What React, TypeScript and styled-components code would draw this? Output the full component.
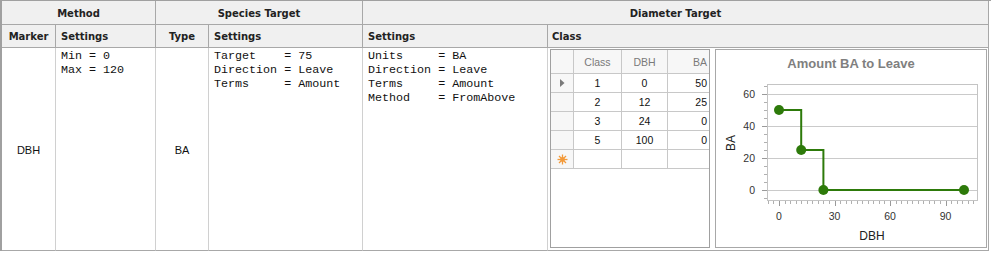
import React from "react";
import styled, { createGlobalStyle } from "styled-components";

const GlobalStyle = createGlobalStyle`
  body {
    margin: 0;
    background: #ffffff;
    font-family: "Liberation Sans", Arial, sans-serif;
  }
`;

// chart scale (local svg coords)
const xOf = (v: number) => 63 + v * 1.85;
const yOf = (v: number) => 140 - v * 1.6;

const rows = [
  { cls: 1, dbh: 0, ba: 50 },
  { cls: 2, dbh: 12, ba: 25 },
  { cls: 3, dbh: 24, ba: 0 },
  { cls: 5, dbh: 100, ba: 0 },
];

const App: React.FC = () => {
  return (
    <>
      <GlobalStyle />
      <Table>
        <HeadCell $span={2}>Method</HeadCell>
        <HeadCell $span={2}>Species Target</HeadCell>
        <HeadCell $span={2}>Diameter Target</HeadCell>

        <HeadCell $align="center">Marker</HeadCell>
        <HeadCell $align="left">Settings</HeadCell>
        <HeadCell $align="center">Type</HeadCell>
        <HeadCell $align="left">Settings</HeadCell>
        <HeadCell $align="left">Settings</HeadCell>
        <HeadCell $align="left" $pad={4}>Class</HeadCell>

        <ValueCell>DBH</ValueCell>
        <CodeCell>{"Min = 0\nMax = 120"}</CodeCell>
        <ValueCell>BA</ValueCell>
        <CodeCell>{"Target    = 75\nDirection = Leave\nTerms     = Amount"}</CodeCell>
        <CodeCell>
          {"Units     = BA\nDirection = Leave\nTerms     = Amount\nMethod    = FromAbove"}
        </CodeCell>
        <ClassCell>
          <DataGrid>
            <GridRow $head>
              <Indicator $head />
              <GridCell $w={48} $align="center" $head>Class</GridCell>
              <GridCell $w={46} $align="center" $head>DBH</GridCell>
              <GridCell $w={41} $align="right" $head $last>BA</GridCell>
            </GridRow>
            {rows.map((r, i) => (
              <GridRow key={r.cls}>
                <Indicator>
                  {i === 0 && (
                    <svg width="5" height="8" viewBox="0 0 5 8">
                      <path d="M0 0 L4.5 4 L0 8 Z" fill="#7a7a7a" />
                    </svg>
                  )}
                </Indicator>
                <GridCell $w={48} $align="center">{r.cls}</GridCell>
                <GridCell $w={46} $align="center">{r.dbh}</GridCell>
                <GridCell $w={41} $align="right" $last>{r.ba}</GridCell>
              </GridRow>
            ))}
            <GridRow>
              <Indicator>
                <svg width="11" height="11" viewBox="0 0 11 11">
                  <g stroke="#f39a3a" strokeWidth="1.3">
                    <line x1="5.5" y1="0.5" x2="5.5" y2="10.5" />
                    <line x1="0.5" y1="5.5" x2="10.5" y2="5.5" />
                    <line x1="2" y1="2" x2="9" y2="9" />
                    <line x1="9" y1="2" x2="2" y2="9" />
                  </g>
                  <circle cx="5.5" cy="5.5" r="2.4" fill="#f39a3a" />
                </svg>
              </Indicator>
              <GridCell $w={48} $align="center" />
              <GridCell $w={46} $align="center" />
              <GridCell $w={41} $align="right" $last />
            </GridRow>
          </DataGrid>

          <ChartBox>
            <svg width="270" height="196" viewBox="0 0 270 196">
              <text
                x="135"
                y="18"
                textAnchor="middle"
                fontFamily="Liberation Sans, Arial, sans-serif"
                fontWeight="bold"
                fontSize="13"
                fill="#7f7f7f"
              >
                Amount BA to Leave
              </text>

              {/* gridlines */}
              {[0, 20, 40, 60].map((v) => (
                <line key={v} x1="51" x2="261" y1={yOf(v) + 0.5} y2={yOf(v) + 0.5} stroke="#cacaca" />
              ))}
              <rect x="51.5" y="34.5" width="210" height="116" fill="none" stroke="#c4c4c4" />

              {/* y ticks */}
              {[-5, 5, 10, 15, 25, 30, 35, 45, 50, 55, 65].map((v) => (
                <line key={v} x1="48" x2="51" y1={yOf(v) + 0.5} y2={yOf(v) + 0.5} stroke="#b0b0b0" />
              ))}
              {[0, 20, 40, 60].map((v) => (
                <line key={v} x1="46" x2="51" y1={yOf(v) + 0.5} y2={yOf(v) + 0.5} stroke="#9a9a9a" />
              ))}
              {[0, 20, 40, 60].map((v) => (
                <text
                  key={v}
                  x="39"
                  y={yOf(v) + 4}
                  textAnchor="end"
                  fontFamily="Liberation Sans, Arial, sans-serif"
                  fontSize="10.5"
                  fill="#333"
                >
                  {v}
                </text>
              ))}

              {/* x ticks */}
              {Array.from({ length: 38 }, (_, i) => -6 + i * 3).map((v) => (
                <line
                  key={v}
                  x1={Math.round(xOf(v)) + 0.5}
                  x2={Math.round(xOf(v)) + 0.5}
                  y1="151"
                  y2={v % 30 === 0 ? 156 : 154}
                  stroke={v % 30 === 0 ? "#9a9a9a" : "#b0b0b0"}
                />
              ))}
              {[0, 30, 60, 90].map((v) => (
                <text
                  key={v}
                  x={xOf(v)}
                  y="169.5"
                  textAnchor="middle"
                  fontFamily="Liberation Sans, Arial, sans-serif"
                  fontSize="10.5"
                  fill="#333"
                >
                  {v}
                </text>
              ))}

              <text
                x="156"
                y="189.5"
                textAnchor="middle"
                fontFamily="Liberation Sans, Arial, sans-serif"
                fontSize="12"
                fill="#222"
              >
                DBH
              </text>
              <text
                transform="translate(19 93) rotate(-90)"
                textAnchor="middle"
                fontFamily="Liberation Sans, Arial, sans-serif"
                fontSize="12"
                fill="#222"
              >
                BA
              </text>

              {/* series */}
              <path
                d={`M${xOf(0)} ${yOf(50)} H${xOf(12)} V${yOf(25)} H${xOf(24)} V${yOf(0)} H${xOf(100)}`}
                fill="none"
                stroke="#2d7a0a"
                strokeWidth="2"
              />
              {rows.map((r) => (
                <circle key={r.cls} cx={xOf(r.dbh)} cy={yOf(r.ba)} r="5" fill="#2d7a0a" />
              ))}
            </svg>
          </ChartBox>
        </ClassCell>
      </Table>
    </>
  );
};

const Table = styled.div`
  display: grid;
  grid-template-columns: 54px 100px 53px 154px 185px 441px;
  grid-template-rows: 24px 23px 203px;
  width: 989px;
  border-top: 1px solid #a0a0a0;
  border-left: 2px solid #a0a0a0;
`;

const HeadCell = styled.div<{ $span?: number; $align?: string; $pad?: number }>`
  grid-column: span ${(p) => p.$span || 1};
  display: flex;
  align-items: center;
  justify-content: ${(p) =>
    p.$align === "left" ? "flex-start" : "center"};
  padding: 1px ${(p) => (p.$pad !== undefined ? p.$pad : 5)}px 0;
  background-color: #f0f0f0;
  border-right: 1px solid #a8a8a8;
  border-bottom: 1px solid #a8a8a8;
  font-family: "DejaVu Sans", Verdana, sans-serif;
  font-weight: bold;
  font-size: 10px;
  color: #222;
  white-space: nowrap;
`;

const BodyCell = styled.div`
  border-right: 1px solid #d0d0d0;
  border-bottom: 1px solid #a8a8a8;
  background: #fff;
`;

const ValueCell = styled(BodyCell)`
  display: flex;
  align-items: center;
  justify-content: center;
  font-size: 11px;
  color: #111;
  padding-top: 1px;
`;

const CodeCell = styled(BodyCell)`
  padding: 1px 5px 0;
  font-family: "Liberation Mono", "Courier New", monospace;
  font-size: 11.7px;
  line-height: 14px;
  white-space: pre;
  color: #111;
`;

const ClassCell = styled(BodyCell)`
  display: flex;
  gap: 5px;
  padding: 1px 1px 2px 2px;
  border-right-color: #a8a8a8;
`;

const DataGrid = styled.div`
  width: 160px;
  box-sizing: border-box;
  border: 1px solid #a0a0a0;
  background: #fff;
  font-size: 10.5px;
`;

const GridRow = styled.div<{ $head?: boolean }>`
  display: flex;
  height: ${(p) => (p.$head ? 24 : 19)}px;
`;

const Indicator = styled.div<{ $head?: boolean }>`
  width: 23px;
  box-sizing: border-box;
  display: flex;
  align-items: center;
  justify-content: center;
  background: #f7f7f7;
  border-right: 1px solid #c8c8c8;
  border-bottom: 1px solid #c8c8c8;
`;

const GridCell = styled.div<{ $w: number; $align: string; $head?: boolean; $last?: boolean }>`
  width: ${(p) => p.$w}px;
  box-sizing: border-box;
  display: flex;
  align-items: center;
  justify-content: ${(p) => (p.$align === "right" ? "flex-end" : "center")};
  padding: 0 ${(p) => (p.$align === "right" ? 2 : 0)}px 0 0;
  background: ${(p) => (p.$head ? "#f7f7f7" : "#fff")};
  color: ${(p) => (p.$head ? "#7a7a7a" : "#111")};
  border-right: ${(p) => (p.$last ? "none" : "1px solid #c8c8c8")};
  border-bottom: 1px solid #c8c8c8;
`;

const ChartBox = styled.div`
  width: 272px;
  box-sizing: border-box;
  border: 1px solid #a8a8a8;
  background: #fff;
  svg {
    display: block;
  }
`;

export default App;
